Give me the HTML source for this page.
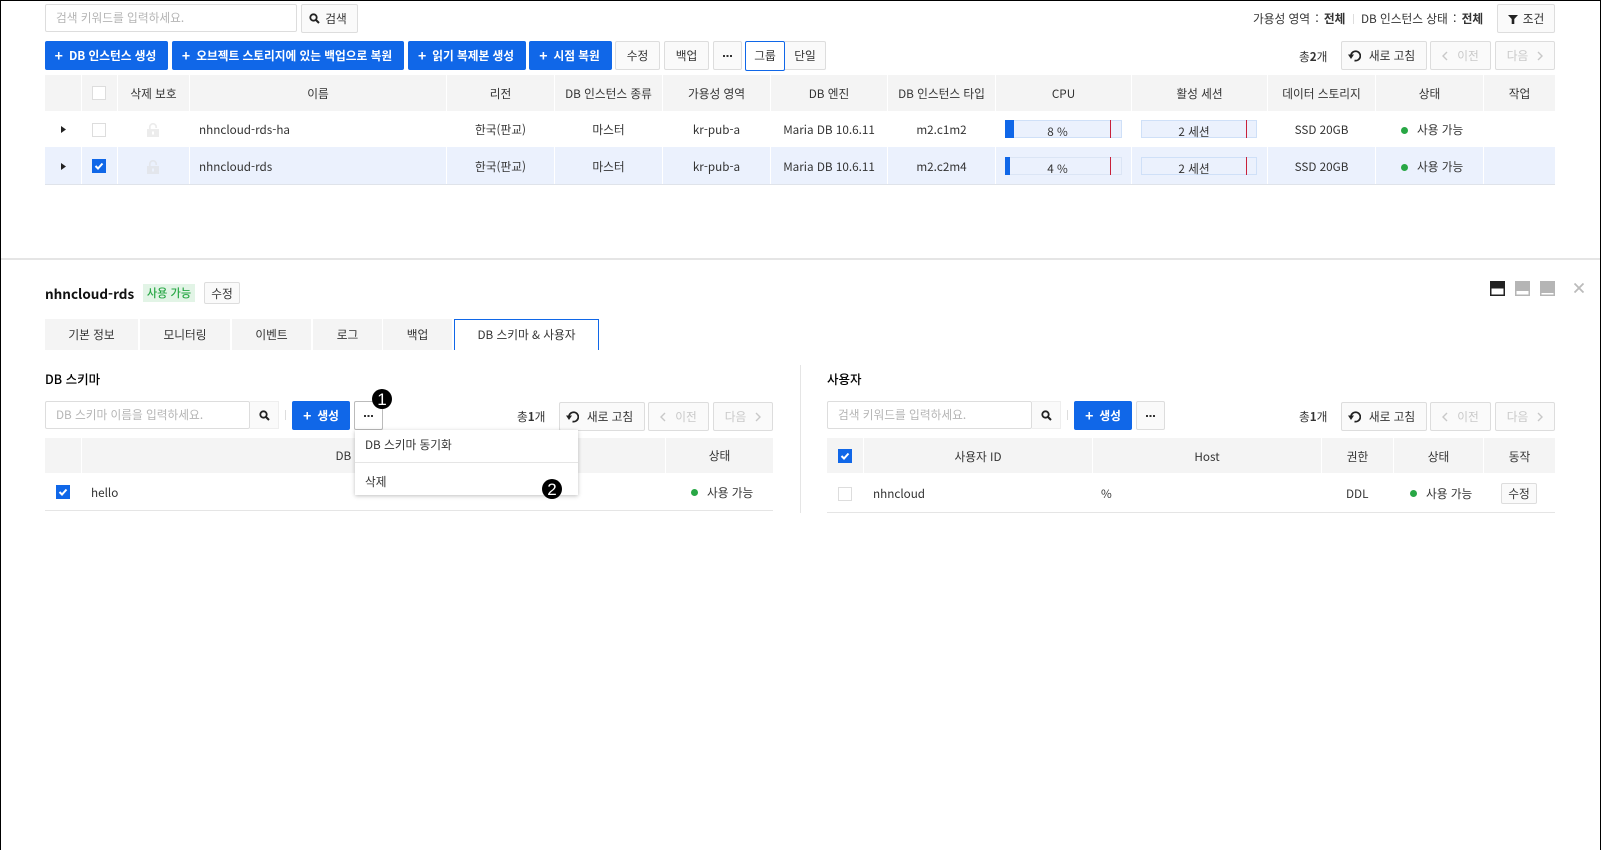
<!DOCTYPE html>
<html lang="ko"><head><meta charset="utf-8"><title>DB</title>
<style>
*{box-sizing:border-box}
html,body{margin:0;padding:0;background:#fff}
body{width:1601px;height:850px;position:relative;overflow:hidden;font:11.7px/1 "Noto Sans CJK KR","Liberation Sans",sans-serif;color:#333}
.a{position:absolute}
.c{position:absolute;display:flex;align-items:center;justify-content:center;white-space:nowrap}
.t{position:absolute;white-space:nowrap;line-height:16px;height:16px}
.t u{text-decoration:none;margin:0 5.300px}
.b{position:absolute;display:flex;align-items:center;justify-content:center;white-space:nowrap;border:1px solid #ddd;border-radius:2px;background:#fafafa;color:#333}
.p{position:absolute;display:flex;align-items:center;justify-content:center;white-space:nowrap;background:#1067e8;border-radius:2px;color:#fff;font-weight:700;padding:1px 2px 0 0}
.p i{font-style:normal;font-size:14px;margin-right:6px;font-weight:700;margin-top:-1px}
.d{color:#c8c8c8}
.h{position:absolute;display:flex;align-items:center;justify-content:center;background:#f4f4f4;white-space:nowrap;color:#333;padding-top:1px}
.i{position:absolute;border:1px solid #ddd;border-radius:2px;background:#fff;color:#b5b5b5;display:flex;align-items:center;padding-left:10px;white-space:nowrap}
.cb{position:absolute;width:14px;height:14px;border:1px solid #ddd;background:#fff}
.cb.on{background:#1067e8;border-color:#1067e8}
.dot{position:absolute;width:7px;height:7px;border-radius:50%;background:#28a745}
.n{position:absolute;width:20px;height:20px;border-radius:50%;background:#000;color:#fff;display:flex;align-items:center;justify-content:center;font:17px/1 "Liberation Sans",sans-serif}
.r{padding-right:5px}
.r svg{margin-right:8px}
svg{display:block}
</style></head><body>
<div class="a" style="left:0;top:0;width:1px;height:850px;background:#000"></div>
<div class="a" style="left:1600px;top:0;width:1px;height:850px;background:#000"></div>
<div class="a" style="left:0;top:0;width:1601px;height:1px;background:#000"></div>

<div class="i" style="left:45px;top:4px;width:252px;height:28px">검색 키워드를 입력하세요.</div>
<div class="b" style="left:301px;top:4px;width:57px;height:29px;padding-right:3px"><svg width="11" height="11" viewBox="0 0 11 11" style="margin-right:5px"><circle cx="4.500" cy="4.500" r="3.200" fill="none" stroke="#222" stroke-width="1.800"/><path d="M7 7l3 3" stroke="#222" stroke-width="2"/></svg>검색</div>

<div class="t" style="left:1253px;top:11px">가용성 영역<u>:</u><b>전체</b></div>
<div class="a" style="left:1353px;top:14px;width:1px;height:10px;background:#ddd"></div>
<div class="t" style="left:1361px;top:11px">DB 인스턴스 상태<u>:</u><b>전체</b></div>
<div class="b" style="left:1497px;top:4px;width:58px;height:29px"><svg width="10" height="10" viewBox="0 0 10 10" style="margin-right:5px"><path d="M0 1h10L6.300 5v5H3.700V5z" fill="#222"/></svg>조건</div>

<div class="p" style="left:45px;top:41px;width:123px;height:29px"><i>+</i>DB 인스턴스 생성</div>
<div class="p" style="left:172px;top:41px;width:232px;height:29px"><i>+</i>오브젝트 스토리지에 있는 백업으로 복원</div>
<div class="p" style="left:408px;top:41px;width:118px;height:29px"><i>+</i>읽기 복제본 생성</div>
<div class="p" style="left:529px;top:41px;width:83px;height:29px"><i>+</i>시점 복원</div>
<div class="b" style="left:615px;top:41px;width:45px;height:29px">수정</div>
<div class="b" style="left:664px;top:41px;width:45px;height:29px">백업</div>
<div class="b" style="left:713px;top:41px;width:29px;height:29px"><svg width="9" height="2"><path d="M0 0h2v2H0zM3.500 0h2v2h-2zM7 0h2v2H7z" fill="#333"/></svg></div>
<div class="b" style="left:785px;top:41px;width:41px;height:29px;border-radius:0 2px 2px 0;border-left:0">단일</div>
<div class="b" style="left:745px;top:41px;width:40px;height:30px;border-color:#1067e8;background:#fff">그룹</div>

<div class="t" style="left:1299px;top:49px">총<b>2</b>개</div>
<div class="b r" style="left:1341px;top:41px;width:86px;height:29px"><svg width="13" height="13" viewBox="0 0 13 13"><path d="M3 6A4.700 4.700 0 1 1 6.500 11.500" fill="none" stroke="#222" stroke-width="1.700"/><path d="M0 5.500h6L3 10z" fill="#222"/></svg>새로 고침</div>
<div class="b d" style="left:1430px;top:41px;width:61px;height:29px"><svg width="6" height="10" viewBox="0 0 6 10" style="margin-right:9px"><path d="M5 1L1 5l4 4" fill="none" stroke="#c8c8c8" stroke-width="1.400"/></svg>이전</div>
<div class="b d" style="left:1495px;top:41px;width:60px;height:29px">다음<svg width="6" height="10" viewBox="0 0 6 10" style="margin-left:9px"><path d="M1 1l4 4-4 4" fill="none" stroke="#c8c8c8" stroke-width="1.400"/></svg></div>

<div class="h" style="left:45px;top:75px;width:36px;height:36px"></div>
<div class="h" style="left:82px;top:75px;width:35px;height:36px"></div>
<div class="h" style="left:118px;top:75px;width:71px;height:36px">삭제 보호</div>
<div class="h" style="left:190px;top:75px;width:256px;height:36px">이름</div>
<div class="h" style="left:447px;top:75px;width:107px;height:36px">리전</div>
<div class="h" style="left:555px;top:75px;width:107px;height:36px">DB 인스턴스 종류</div>
<div class="h" style="left:663px;top:75px;width:107px;height:36px">가용성 영역</div>
<div class="h" style="left:771px;top:75px;width:116px;height:36px">DB 엔진</div>
<div class="h" style="left:888px;top:75px;width:107px;height:36px">DB 인스턴스 타입</div>
<div class="h" style="left:996px;top:75px;width:135px;height:36px">CPU</div>
<div class="h" style="left:1132px;top:75px;width:135px;height:36px">활성 세션</div>
<div class="h" style="left:1268px;top:75px;width:107px;height:36px">데이터 스토리지</div>
<div class="h" style="left:1376px;top:75px;width:107px;height:36px">상태</div>
<div class="h" style="left:1484px;top:75px;width:71px;height:36px">작업</div>
<div class="cb" style="left:92px;top:86px"></div>

<div class="a" style="left:45px;top:147px;width:1510px;height:37px;background:#ebf1fd"></div>
<div class="a" style="left:45px;top:184px;width:1510px;height:1px;background:#dfe3ea"></div>
<div class="a" style="left:81px;top:147px;width:1px;height:37px;background:#fff"></div>
<div class="a" style="left:117px;top:147px;width:1px;height:37px;background:#fff"></div>
<div class="a" style="left:189px;top:147px;width:1px;height:37px;background:#fff"></div>
<div class="a" style="left:446px;top:147px;width:1px;height:37px;background:#fff"></div>
<div class="a" style="left:554px;top:147px;width:1px;height:37px;background:#fff"></div>
<div class="a" style="left:662px;top:147px;width:1px;height:37px;background:#fff"></div>
<div class="a" style="left:770px;top:147px;width:1px;height:37px;background:#fff"></div>
<div class="a" style="left:887px;top:147px;width:1px;height:37px;background:#fff"></div>
<div class="a" style="left:995px;top:147px;width:1px;height:37px;background:#fff"></div>
<div class="a" style="left:1131px;top:147px;width:1px;height:37px;background:#fff"></div>
<div class="a" style="left:1267px;top:147px;width:1px;height:37px;background:#fff"></div>
<div class="a" style="left:1375px;top:147px;width:1px;height:37px;background:#fff"></div>
<div class="a" style="left:1483px;top:147px;width:1px;height:37px;background:#fff"></div>

<svg class="a" style="left:61px;top:126px" width="5" height="7"><path d="M0 0l5 3.500L0 7z" fill="#222"/></svg>
<svg class="a" style="left:61px;top:163px" width="5" height="7"><path d="M0 0l5 3.500L0 7z" fill="#222"/></svg>
<div class="cb" style="left:92px;top:123px"></div>
<div class="cb on" style="left:92px;top:159px"><svg width="12" height="12" viewBox="0 0 12 12"><path d="M2.500 6l2.500 2.500L9.500 3.500" fill="none" stroke="#fff" stroke-width="2"/></svg></div>
<svg class="a" style="left:147px;top:123px" width="12" height="14" viewBox="0 0 12 14"><path d="M2.800 6.500V4a3.200 3.200 0 0 1 6.400 0v1" fill="none" stroke="#ececec" stroke-width="1.700"/><path d="M0 6h12v8H0zM5 8.500v3h2v-3z" fill="#ececec" fill-rule="evenodd"/></svg>
<svg class="a" style="left:147px;top:160px" width="12" height="14" viewBox="0 0 12 14"><path d="M2.800 6.500V4a3.200 3.200 0 0 1 6.400 0v1" fill="none" stroke="#e3e6ec" stroke-width="1.700"/><path d="M0 6h12v8H0zM5 8.500v3h2v-3z" fill="#e3e6ec" fill-rule="evenodd"/></svg>

<div class="t" style="left:199px;top:122px">nhncloud-rds-ha</div>
<div class="t" style="left:199px;top:159px">nhncloud-rds</div>
<div class="c" style="left:447px;top:122px;width:107px;height:16px">한국(판교)</div>
<div class="c" style="left:447px;top:159px;width:107px;height:16px">한국(판교)</div>
<div class="c" style="left:555px;top:122px;width:107px;height:16px">마스터</div>
<div class="c" style="left:555px;top:159px;width:107px;height:16px">마스터</div>
<div class="c" style="left:663px;top:122px;width:107px;height:16px">kr-pub-a</div>
<div class="c" style="left:663px;top:159px;width:107px;height:16px">kr-pub-a</div>
<div class="c" style="left:771px;top:122px;width:116px;height:16px">Maria DB 10.6.11</div>
<div class="c" style="left:771px;top:159px;width:116px;height:16px">Maria DB 10.6.11</div>
<div class="c" style="left:888px;top:122px;width:107px;height:16px">m2.c1m2</div>
<div class="c" style="left:888px;top:159px;width:107px;height:16px">m2.c2m4</div>

<div class="a" style="left:1005px;top:120px;width:117px;height:18px;background:#ebf1fd;border:1px solid #cfe0f8"></div>
<div class="a" style="left:1005px;top:120px;width:9px;height:18px;background:#1067e8"></div>
<div class="a" style="left:1110px;top:120px;width:1px;height:18px;background:#c8203a"></div>
<div class="c" style="left:1005px;top:124px;width:105px;height:16px">8 %</div>
<div class="a" style="left:1005px;top:157px;width:117px;height:18px;background:#ebf1fd;border:1px solid #dbe5f5"></div>
<div class="a" style="left:1005px;top:157px;width:5px;height:18px;background:#1067e8"></div>
<div class="a" style="left:1110px;top:157px;width:1px;height:18px;background:#c8203a"></div>
<div class="c" style="left:1005px;top:161px;width:105px;height:16px">4 %</div>

<div class="a" style="left:1141px;top:120px;width:116px;height:18px;background:#ebf1fd;border:1px solid #cfe0f8"></div>
<div class="a" style="left:1246px;top:120px;width:1px;height:18px;background:#c8203a"></div>
<div class="c" style="left:1141px;top:124px;width:106px;height:16px">2 세션</div>
<div class="a" style="left:1141px;top:157px;width:116px;height:18px;background:#ebf1fd;border:1px solid #cfe0f8"></div>
<div class="a" style="left:1246px;top:157px;width:1px;height:18px;background:#c8203a"></div>
<div class="c" style="left:1141px;top:161px;width:106px;height:16px">2 세션</div>

<div class="c" style="left:1268px;top:122px;width:107px;height:16px">SSD 20GB</div>
<div class="c" style="left:1268px;top:159px;width:107px;height:16px">SSD 20GB</div>
<div class="dot" style="left:1401px;top:127px"></div>
<div class="t" style="left:1417px;top:122px">사용 가능</div>
<div class="dot" style="left:1401px;top:164px"></div>
<div class="t" style="left:1417px;top:159px">사용 가능</div>

<div class="a" style="left:1px;top:258px;width:1599px;height:2px;background:#e5e5e5"></div>

<div class="t" style="left:45px;top:285px;font-size:13.500px;font-weight:700;color:#111">nhncloud-rds</div>
<div class="c" style="left:143px;top:284px;width:52px;height:18px;background:#e2f4e6;color:#28a745;font-size:11.200px;font-weight:500;padding-top:1px">사용 가능</div>
<div class="b" style="left:204px;top:282px;width:36px;height:22px;padding-top:1px">수정</div>

<svg class="a" style="left:1490px;top:281px" width="15" height="15"><rect width="15" height="15" fill="#222"/><rect x="1.500" y="7.500" width="12" height="6" fill="#fff"/></svg>
<svg class="a" style="left:1515px;top:281px" width="15" height="15"><rect width="15" height="15" fill="#b5b5b5"/><rect x="1.500" y="10" width="12" height="3.500" fill="#fff"/></svg>
<svg class="a" style="left:1540px;top:281px" width="15" height="15"><rect width="15" height="15" fill="#b5b5b5"/><rect x="1.500" y="12" width="12" height="1.500" fill="#fff"/></svg>
<svg class="a" style="left:1574px;top:283px" width="10" height="10"><path d="M.5.500l9 9M9.500.500l-9 9" stroke="#bbb" stroke-width="1.800"/></svg>

<div class="h" style="left:45px;top:319px;width:93px;height:31px;padding-top:0">기본 정보</div>
<div class="h" style="left:140px;top:319px;width:90px;height:31px;padding-top:0">모니터링</div>
<div class="h" style="left:232px;top:319px;width:79px;height:31px;padding-top:0">이벤트</div>
<div class="h" style="left:313px;top:319px;width:69px;height:31px;padding-top:0">로그</div>
<div class="h" style="left:383px;top:319px;width:69px;height:31px;padding-top:0">백업</div>
<div class="h" style="left:454px;top:319px;width:145px;height:31px;background:#fff;border:1px solid #1067e8;border-bottom:0;padding-top:0">DB 스키마 &amp; 사용자</div>

<div class="t" style="left:45px;top:371px;font-weight:500;color:#000;font-size:12.500px">DB 스키마</div>
<div class="i" style="left:45px;top:401px;width:205px;height:28px">DB 스키마 이름을 입력하세요.</div>
<div class="a" style="left:250px;top:401px;width:29px;height:28px;background:#fafafa;border:1px solid #eee;border-left:0;display:flex;align-items:center;justify-content:center"><svg width="11" height="11" viewBox="0 0 11 11"><circle cx="4.500" cy="4.500" r="3.200" fill="none" stroke="#222" stroke-width="1.800"/><path d="M7 7l3 3" stroke="#222" stroke-width="2"/></svg></div>
<div class="a" style="left:285px;top:410px;width:1px;height:10px;background:#ddd"></div>
<div class="p" style="left:292px;top:401px;width:58px;height:29px;padding-right:0"><i>+</i>생성</div>
<div class="b" style="left:354px;top:401px;width:29px;height:29px;border-color:#bbb;background:#fff"><svg width="9" height="2"><path d="M0 0h2v2H0zM3.500 0h2v2h-2zM7 0h2v2H7z" fill="#333"/></svg></div>

<div class="t" style="left:517px;top:409px">총<b>1</b>개</div>
<div class="b r" style="left:559px;top:402px;width:86px;height:29px"><svg width="13" height="13" viewBox="0 0 13 13"><path d="M3 6A4.700 4.700 0 1 1 6.500 11.500" fill="none" stroke="#222" stroke-width="1.700"/><path d="M0 5.500h6L3 10z" fill="#222"/></svg>새로 고침</div>
<div class="b d" style="left:648px;top:402px;width:61px;height:29px"><svg width="6" height="10" viewBox="0 0 6 10" style="margin-right:9px"><path d="M5 1L1 5l4 4" fill="none" stroke="#c8c8c8" stroke-width="1.400"/></svg>이전</div>
<div class="b d" style="left:713px;top:402px;width:60px;height:29px">다음<svg width="6" height="10" viewBox="0 0 6 10" style="margin-left:9px"><path d="M1 1l4 4-4 4" fill="none" stroke="#c8c8c8" stroke-width="1.400"/></svg></div>

<div class="h" style="left:45px;top:438px;width:36px;height:35px"></div>
<div class="h" style="left:82px;top:438px;width:583px;height:35px">DB 스키마 이름</div>
<div class="h" style="left:666px;top:438px;width:107px;height:35px">상태</div>
<div class="cb on" style="left:56px;top:485px"><svg width="12" height="12" viewBox="0 0 12 12"><path d="M2.500 6l2.500 2.500L9.500 3.500" fill="none" stroke="#fff" stroke-width="2"/></svg></div>
<div class="t" style="left:91px;top:485px">hello</div>
<div class="dot" style="left:691px;top:489px"></div>
<div class="t" style="left:707px;top:485px">사용 가능</div>
<div class="a" style="left:45px;top:510px;width:728px;height:1px;background:#e5e5e5"></div>

<div class="a" style="left:355px;top:430px;width:223px;height:65px;background:#fff;box-shadow:0 1px 4px rgba(0,0,0,.25)"></div>
<div class="a" style="left:355px;top:462px;width:223px;height:1px;background:#e5e5e5"></div>
<div class="t" style="left:365px;top:437px">DB 스키마 동기화</div>
<div class="t" style="left:365px;top:474px">삭제</div>
<div class="n" style="left:372px;top:389px">1</div>
<div class="n" style="left:542px;top:479px">2</div>

<div class="a" style="left:800px;top:365px;width:1px;height:148px;background:#e5e5e5"></div>

<div class="t" style="left:827px;top:371px;font-weight:500;color:#000;font-size:12.500px">사용자</div>
<div class="i" style="left:827px;top:401px;width:205px;height:28px">검색 키워드를 입력하세요.</div>
<div class="a" style="left:1032px;top:401px;width:29px;height:28px;background:#fafafa;border:1px solid #eee;border-left:0;display:flex;align-items:center;justify-content:center"><svg width="11" height="11" viewBox="0 0 11 11"><circle cx="4.500" cy="4.500" r="3.200" fill="none" stroke="#222" stroke-width="1.800"/><path d="M7 7l3 3" stroke="#222" stroke-width="2"/></svg></div>
<div class="a" style="left:1067px;top:410px;width:1px;height:10px;background:#ddd"></div>
<div class="p" style="left:1074px;top:401px;width:58px;height:29px;padding-right:0"><i>+</i>생성</div>
<div class="b" style="left:1136px;top:401px;width:29px;height:29px"><svg width="9" height="2"><path d="M0 0h2v2H0zM3.500 0h2v2h-2zM7 0h2v2H7z" fill="#333"/></svg></div>

<div class="t" style="left:1299px;top:409px">총<b>1</b>개</div>
<div class="b r" style="left:1341px;top:402px;width:86px;height:29px"><svg width="13" height="13" viewBox="0 0 13 13"><path d="M3 6A4.700 4.700 0 1 1 6.500 11.500" fill="none" stroke="#222" stroke-width="1.700"/><path d="M0 5.500h6L3 10z" fill="#222"/></svg>새로 고침</div>
<div class="b d" style="left:1430px;top:402px;width:61px;height:29px"><svg width="6" height="10" viewBox="0 0 6 10" style="margin-right:9px"><path d="M5 1L1 5l4 4" fill="none" stroke="#c8c8c8" stroke-width="1.400"/></svg>이전</div>
<div class="b d" style="left:1495px;top:402px;width:60px;height:29px">다음<svg width="6" height="10" viewBox="0 0 6 10" style="margin-left:9px"><path d="M1 1l4 4-4 4" fill="none" stroke="#c8c8c8" stroke-width="1.400"/></svg></div>

<div class="h" style="left:827px;top:438px;width:36px;height:35px"></div>
<div class="h" style="left:864px;top:438px;width:228px;height:35px;padding-top:2px">사용자 ID</div>
<div class="h" style="left:1093px;top:438px;width:228px;height:35px;padding-top:2px">Host</div>
<div class="h" style="left:1322px;top:438px;width:71px;height:35px;padding-top:2px">권한</div>
<div class="h" style="left:1394px;top:438px;width:89px;height:35px;padding-top:2px">상태</div>
<div class="h" style="left:1484px;top:438px;width:71px;height:35px;padding-top:2px">동작</div>
<div class="cb on" style="left:838px;top:449px"><svg width="12" height="12" viewBox="0 0 12 12"><path d="M2.500 6l2.500 2.500L9.500 3.500" fill="none" stroke="#fff" stroke-width="2"/></svg></div>
<div class="cb" style="left:838px;top:487px"></div>
<div class="t" style="left:873px;top:486px">nhncloud</div>
<div class="t" style="left:1101px;top:486px">%</div>
<div class="t" style="left:1346px;top:486px">DDL</div>
<div class="dot" style="left:1410px;top:490px"></div>
<div class="t" style="left:1426px;top:486px">사용 가능</div>
<div class="b" style="left:1501px;top:483px;width:36px;height:21px">수정</div>
<div class="a" style="left:827px;top:512px;width:728px;height:1px;background:#e5e5e5"></div>
</body></html>
